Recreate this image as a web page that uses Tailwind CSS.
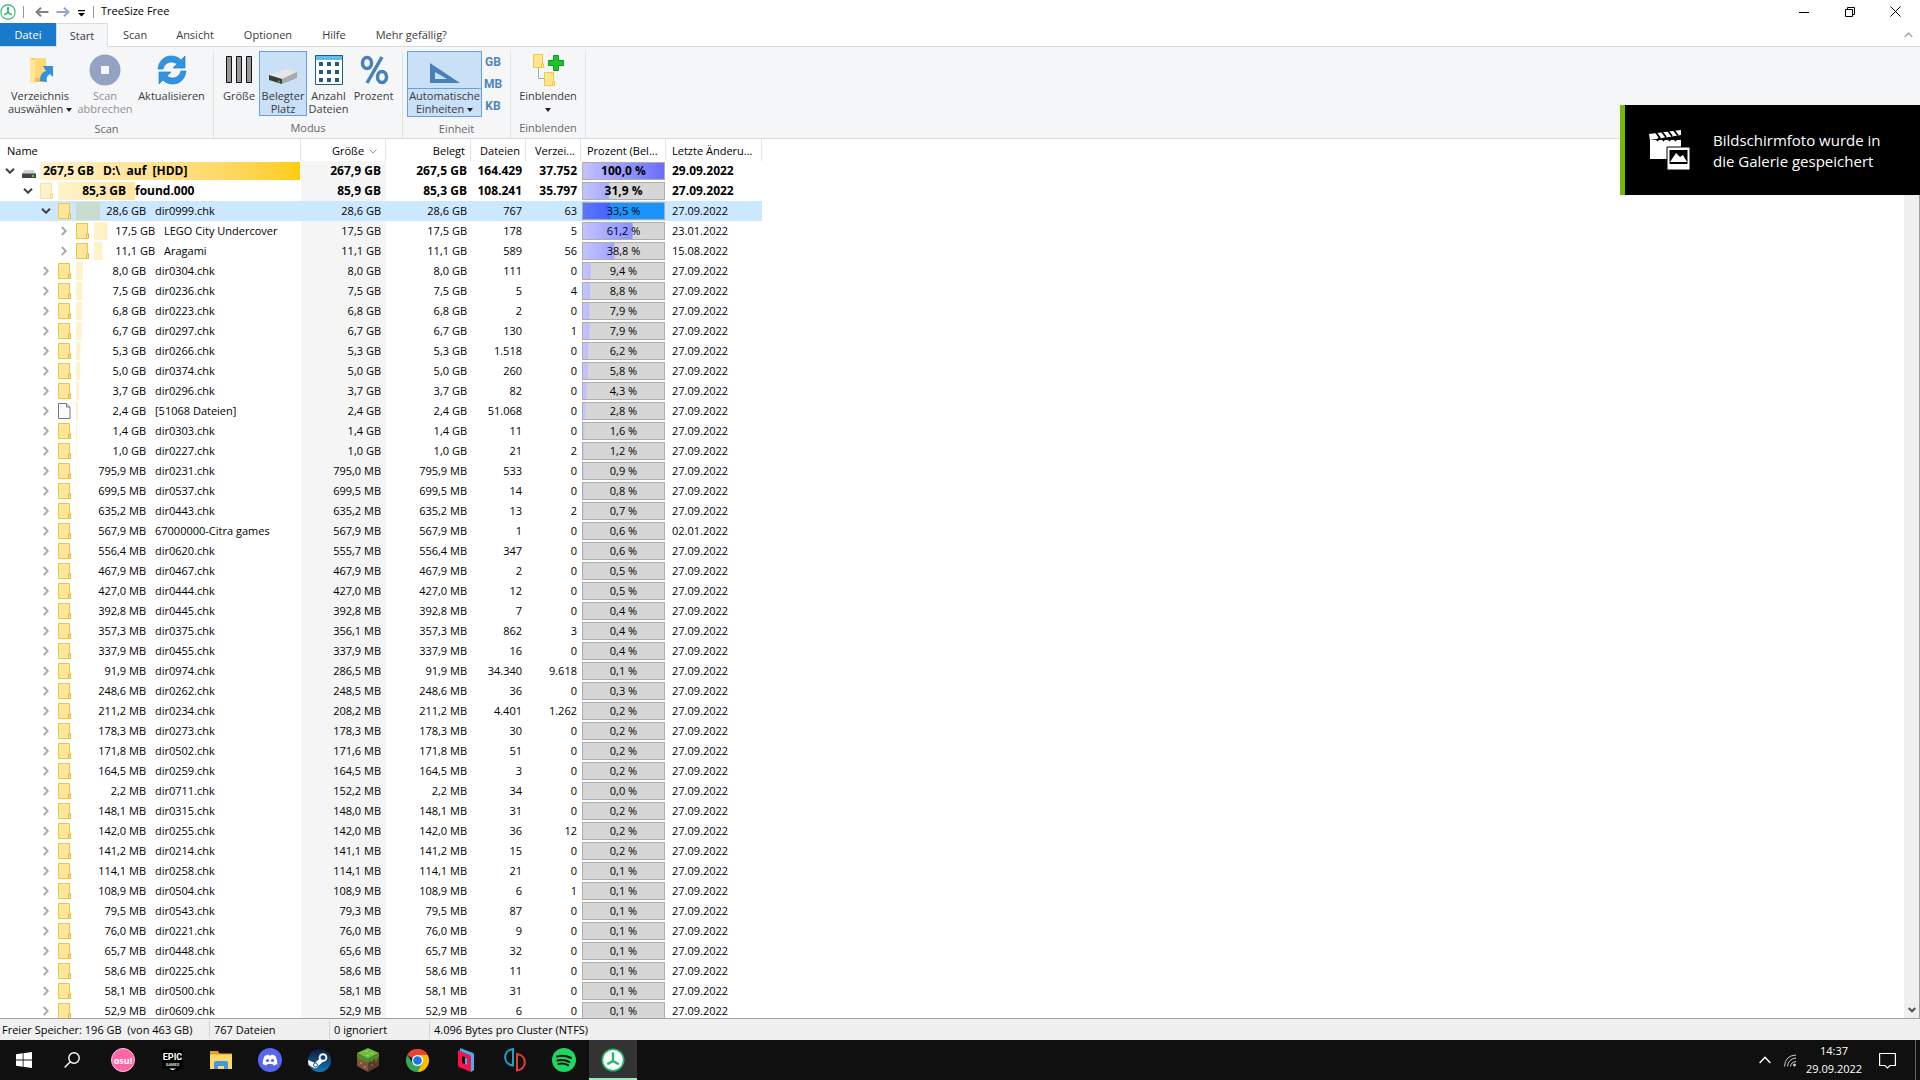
<!DOCTYPE html>
<html lang="de">
<head>
    <meta charset="UTF-8">
    <meta name="viewport" content="width=device-width, initial-scale=1.0">
    <title>TreeSize Free</title>
    <script src="https://cdn.jsdelivr.net/npm/@tailwindcss/browser@4"></script>
</head>
<body class="h-screen flex flex-col overflow-hidden bg-white text-black font-['Open_Sans','Noto_Sans',sans-serif] text-[11px] leading-[13px]">

    <!-- Icons -->
    <svg class="hidden">
        <symbol id="folder" viewBox="0 0 13 16">
            <path d="M.5.5h11v10h1v5H.5z" fill="#ffe699" stroke="#ecc544"/>
            <path d="M10.500 15.500v-4.500h2v4.500z" fill="#ffeaa8" stroke="#e4b930"/>
        </symbol>
        <symbol id="file" viewBox="0 0 13 16">
            <path d="M.5.5h8l3.500 3.500v11.500H.5z" fill="#fafafa" stroke="#777"/>
            <path d="M8.500.5v3.500H12" fill="#ddd" stroke="#777"/>
        </symbol>
        <symbol id="drive" viewBox="0 0 14 8">
            <path d="M2.500 0h9L14 4H0z" fill="#d2d2d2"/>
            <rect y="3.500" width="14" height="4.500" rx=".5" fill="#444"/>
            <rect x="10" y="5" width="2" height="2" fill="#2ee64a"/>
        </symbol>
        <symbol id="open" viewBox="0 0 10 6"><path d="M1 .7l4 4 4-4" fill="none" stroke="#404040" stroke-width="2"/></symbol>
        <symbol id="closed" viewBox="0 0 6 10"><path d="M.8 1l4 4-4 4" fill="none" stroke="#a6a6a6" stroke-width="1.800"/></symbol>
        <symbol id="logo" viewBox="0 0 24 24">
            <circle cx="12" cy="12" r="10.700" fill="#fff" stroke="#1fb866" stroke-width="1.600"/>
            <path d="M12 4.500v8.500M12 13l-5.800 3.300M12 13l5.800 3.300" stroke="#1fb866" stroke-width="2.400"/>
            <path d="M12 4l1 5h-2z" fill="#1fb866"/>
        </symbol>
    </svg>

    <!-- Titelleiste -->
    <header class="flex h-[23px] shrink-0 items-center text-[12px]">
        <svg class="size-4"><use href="#logo"/></svg>
        <span class="ml-[7px] h-3 w-px bg-[#999]"></span>
        <button aria-label="Zurück" class="ml-[11px]"><svg width="14" height="10" viewBox="0 0 14 10" fill="none" stroke="#808080" stroke-width="2"><path d="M13.500 5H2M6 .7L1.500 5 6 9.300"/></svg></button>
        <button aria-label="Vorwärts" class="ml-[7px]"><svg width="14" height="10" viewBox="0 0 14 10" fill="none" stroke="#98a7c6" stroke-width="2"><path d="M.5 5H12M8 .7L12.500 5 8 9.300"/></svg></button>
        <button aria-label="Schnellzugriff anpassen" class="ml-2 mt-[3px]"><svg width="7" height="7"><path d="M0 0h7v1.300H0zM0 3h7L3.500 6.500z"/></svg></button>
        <span class="ml-2 h-3 w-px bg-[#999]"></span>
        <h1 class="ml-[7px] pb-[2px] text-[11px]">TreeSize Free</h1>
        <div class="ml-auto flex items-center">
            <button aria-label="Minimieren" class="flex h-5 w-[46px] items-center justify-center"><svg width="10" height="10"><path d="M0 5.500h10" stroke="#000"/></svg></button>
            <button aria-label="Verkleinern" class="flex h-5 w-[45px] items-center justify-center"><svg width="10" height="10" fill="none" stroke="#000"><path d="M.5 2.500h7v7h-7zM2.500 2.500v-2h7v7h-2"/></svg></button>
            <button aria-label="Schließen" class="mr-[2px] flex h-5 w-[46px] items-center justify-center"><svg width="11" height="11" stroke="#000"><path d="M.5.5l10 10M10.500.5l-10 10"/></svg></button>
        </div>
    </header>

    <!-- Registerkarten -->
    <nav class="flex h-6 shrink-0 border-b border-[#dadbdc] text-[#3b3b3b]">
        <button class="h-[23px] w-14 bg-[#1979ca] text-white">Datei</button>
        <button class="h-6 w-[52px] border border-b-0 border-[#dadbdc] bg-[#f5f6f7]">Start</button>
        <button class="px-[15px]">Scan</button>
        <button class="px-[14px]">Ansicht</button>
        <button class="px-4">Optionen</button>
        <button class="px-[14px]">Hilfe</button>
        <button class="px-4">Mehr gefällig?</button>
        <button aria-label="Menüband minimieren" class="ml-auto mr-[7px]"><svg width="9" height="6" fill="none" stroke="#aaa" stroke-width="1.500"><path d="M.7 5l3.800-4 3.800 4"/></svg></button>
    </nav>

    <!-- Menüband -->
    <section class="flex h-[92px] shrink-0 border-b border-[#dadbdc] bg-[#f5f6f7] pt-1 text-[#3b3b3b]">
        <div class="flex flex-col">
            <div class="flex h-[66px] pl-[7px] pr-[7px]">
                <button class="flex w-[66px] flex-col items-center whitespace-nowrap">
                    <svg class="h-[38px] w-8 shrink-0" viewBox="0 0 32 38">
                        <path d="M6 7h16v24H6z" fill="#eebd55"/>
                        <path d="M10 7h12v20H10z" fill="#ffd978"/>
                        <path d="M6 7l5 3v23l-5-3z" fill="#ffe69b"/>
                        <path d="M16 30c0-6 2-9 6-10l-3-5h10v11l-3-3c-3 2-4 4-3 8z" fill="#3291dc"/>
                    </svg>
                    <span>Verzeichnis<br>auswählen <span class="inline-block border-x-3 border-t-4 border-x-transparent border-t-[#222] align-middle"></span></span>
                </button>
                <button class="flex w-16 flex-col items-center text-[#909090]">
                    <svg class="h-[38px] w-8 shrink-0" viewBox="0 0 32 38"><circle cx="16" cy="19" r="15.500" fill="#94a3c3"/><path d="M12 15h8v8h-8z" fill="#f5f8ff"/></svg>
                    <span>Scan<br>abbrechen</span>
                </button>
                <button class="flex w-[69px] flex-col items-center">
                    <svg class="h-[38px] w-8 shrink-0" viewBox="0 0 32 38">
                        <g fill="#2f94e4" stroke="#2c80c8" stroke-width=".7">
                            <path id="arrow" d="M2 18C3 9 9 5 15 5c4 0 7 1 10 4l4-4v12H17l4-4c-5-4-12-2-14 5z"/>
                            <use href="#arrow" transform="rotate(180 16 19)"/>
                        </g>
                    </svg>
                    <span>Aktualisieren</span>
                </button>
            </div>
            <p class="pt-[5px] text-center text-[#666]">Scan</p>
        </div>
        <div class="flex flex-col">
            <div class="flex h-[66px] border-l border-[#e0e1e3] pl-[5px] pr-[5px]">
                <button class="flex w-10 flex-col items-center">
                    <svg class="h-[38px] w-8 shrink-0" viewBox="0 0 32 38" fill="#999" stroke="#111"><path d="M3.500 5.500h5v26h-5zM13.500 5.500h5v26h-5zM23.500 5.500h5v26h-5z"/></svg>
                    <span>Größe</span>
                </button>
                <button class="flex w-[48px] flex-col items-center border border-[#62a2e4] bg-[#c9e0f7]">
                    <svg class="h-[37px] w-8 shrink-0" viewBox="0 0 32 37">
                        <path d="M2 23l17-6 11 3-15 7z" fill="#e6e6e6"/>
                        <path d="M15 27l15-7v6l-15 6z" fill="#a9a9a9"/>
                        <path d="M2 23l13 4v5L2 28z" fill="#3c3c3c"/>
                        <path d="M11 28.500l2 .6v1.400l-2-.6z" fill="#20d840"/>
                    </svg>
                    <span>Belegter<br>Platz</span>
                </button>
                <button class="flex w-[43px] flex-col items-center">
                    <svg class="h-[38px] w-8 shrink-0" viewBox="0 0 32 38">
                        <path d="M2.500 4.500h27v29h-27z" fill="#fff" stroke="#1f5c80"/>
                        <path d="M3 5h26v4H3z" fill="#62bdea"/>
                        <path d="M6 11h4v4H6zm8 0h4v4h-4zm8 0h4v4h-4zM6 19h4v4H6zm8 0h4v4h-4zm8 0h4v4h-4zM6 27h4v4H6zm8 0h4v4h-4zm8 0h4v4h-4z" fill="#1f5c80"/>
                    </svg>
                    <span>Anzahl<br>Dateien</span>
                </button>
                <button class="flex w-[47px] flex-col items-center">
                    <svg class="h-[38px] w-8 shrink-0" viewBox="0 0 32 38" fill="none" stroke="#4a80b8" stroke-width="3.500"><ellipse cx="9" cy="12" rx="4.500" ry="5.500"/><ellipse cx="24" cy="26" rx="4.500" ry="5.500"/><path d="M24 6L9 32"/></svg>
                    <span>Prozent</span>
                </button>
            </div>
            <p class="border-l border-[#e0e1e3] pb-1 pt-[5px] text-center text-[#666]">Modus</p>
        </div>
        <div class="flex flex-col">
            <div class="flex h-[66px] border-l border-[#e0e1e3] pl-1 pr-[6px]">
                <button class="flex w-[75px] flex-col items-center border border-[#62a2e4] bg-[#c9e0f7] whitespace-nowrap">
                    <span class="flex h-[37px] w-full shrink-0 justify-center border-b border-[#62a2e4]">
                        <svg class="h-9 w-8" viewBox="0 0 32 36"><path d="M1 11v20h30zm5 9l12 7H6z" fill="#4a80b8" fill-rule="evenodd"/></svg>
                    </span>
                    <span>Automatische<br>Einheiten <span class="inline-block border-x-3 border-t-4 border-x-transparent border-t-[#222] align-middle"></span></span>
                </button>
                <div class="flex w-[22px] flex-col items-center font-['Roboto',sans-serif] text-[12px] font-bold leading-[22px] text-[#4f86bd]">
                    <button>GB</button>
                    <button>MB</button>
                    <button>KB</button>
                </div>
            </div>
            <p class="border-l border-[#e0e1e3] pb-1 pt-[5px] text-center text-[#666]">Einheit</p>
        </div>
        <div class="flex flex-col">
            <div class="flex h-[66px] border-x border-[#e0e1e3] px-[6px]">
                <button class="flex w-[62px] flex-col items-center">
                    <svg class="h-[38px] w-8 shrink-0" viewBox="0 0 32 38">
                        <path d="M6.500 17v10.500H13" fill="none" stroke="#aaa"/>
                        <g fill="#ffe68f" stroke="#ecc94b"><path d="M1.500 3.500h9v9h1v4h-10zM12.500 21.500h9v9h1v4h-10z"/><path d="M9.500 12.500v4M20.500 30.500v4"/></g>
                        <path d="M21.500 4.500h5v5h5v5h-5v5h-5v-5h-5v-5h5z" fill="#1cc42c" stroke="#119a1e"/>
                    </svg>
                    <span>Einblenden<br><span class="inline-block border-x-3 border-t-4 border-x-transparent border-t-[#222] align-middle"></span></span>
                </button>
            </div>
            <p class="border-x border-[#e0e1e3] pb-1 pt-[5px] text-center text-[#666]">Einblenden</p>
        </div>
    </section>

    <!-- Verzeichnisbaum -->
    <main class="flex min-h-0 flex-1 border-b border-r border-[#a0a0a0]">
        <div class="min-w-0 flex-1 overflow-hidden">
            <table class="w-[762px] table-fixed border-separate border-spacing-0 whitespace-nowrap">
                <colgroup>
                    <col class="w-[301px]">
                    <col class="w-[85px]">
                    <col class="w-[85px]">
                    <col class="w-[55px]">
                    <col class="w-[55px]">
                    <col class="w-[85px]">
                    <col class="w-[96px]">
                </colgroup>
                <thead>
                    <tr class="h-[22px]">
                        <th class="border-r border-[#e5e5e5] p-0 pl-[7px] text-left font-normal">Name</th>
                        <th class="border-r border-[#e5e5e5] p-0 pr-2 text-right font-normal"><button>Größe <svg class="ml-[2px] inline" width="8" height="5" fill="none" stroke="#999"><path d="M.5.5L4 4 7.500.5"/></svg></button></th>
                        <th class="border-r border-[#e5e5e5] p-0 pr-[5px] text-right font-normal">Belegt</th>
                        <th class="border-r border-[#e5e5e5] p-0 pr-[5px] text-right font-normal">Dateien</th>
                        <th class="border-r border-[#e5e5e5] p-0 pr-[5px] text-right font-normal">Verzei...</th>
                        <th class="border-r border-[#e5e5e5] p-0 pl-[6px] text-left font-normal">Prozent (Bel...</th>
                        <th class="border-r border-[#e5e5e5] p-0 pl-[6px] text-left font-normal">Letzte Änderu...</th>
                    </tr>
                </thead>
                <tbody id="tree"></tbody>
            </table>
        </div>
        <div class="flex w-[15px] flex-col justify-end bg-[#f0f0f0]">
            <button aria-label="Nach unten" class="flex h-[17px] items-center justify-center"><svg width="8" height="6" fill="none" stroke="#505050" stroke-width="2"><path d="M.7 1L4 4.300 7.300 1"/></svg></button>
        </div>
    </main>

    <!-- Statusleiste -->
    <footer class="flex h-[21px] shrink-0 items-center bg-[#f0f0f0] leading-[18px]">
        <span class="w-[210px] whitespace-pre border-r border-[#d4d4d4] pl-[2px]">Freier Speicher: 196 GB  (von 463 GB)</span>
        <span class="w-[120px] border-r border-[#d4d4d4] pl-1">767 Dateien</span>
        <span class="w-[100px] border-r border-[#d4d4d4] pl-1">0 ignoriert</span>
        <span class="pl-1">4.096 Bytes pro Cluster (NTFS)</span>
    </footer>

    <!-- Taskleiste -->
    <nav class="flex h-10 shrink-0 bg-[#101010] text-white">
        <div class="flex gap-px">
            <button aria-label="Start" class="flex w-12 items-center justify-center"><svg width="16" height="16" fill="#fff"><path d="M0 2.300l6.700-1v6.300H0zM7.500 1.200L16 0v7.600H7.500zM0 8.400h6.700v6.300L0 13.700zM7.500 8.400H16V16l-8.500-1.200z"/></svg></button>
            <button aria-label="Suche" class="flex w-[49px] items-center justify-center pr-[3px]"><svg width="16" height="16" fill="none" stroke="#fff" stroke-width="1.400"><circle cx="10" cy="6" r="5.200"/><path d="M6.300 9.700L.6 15.400"/></svg></button>
            <button aria-label="osu!" class="flex w-12 items-center justify-center"><span class="flex size-6 items-center justify-center rounded-full border border-[#ffc4dc] bg-[#ff66aa] text-[9px] font-bold leading-none">osu!</span></button>
            <button aria-label="Epic Games" class="flex w-12 items-center justify-center">
                <svg width="21" height="23" viewBox="0 0 21 23"><path d="M2 0h17q2 0 2 2v17l-10.500 4L0 19V2q0-2 2-2z" fill="#000"/><path d="M7 19.500h7l-3.500 1.800z" fill="#fff"/><text x="10.500" y="11" text-anchor="middle" font-family="Roboto" font-size="9" font-weight="bold" fill="#fff">EPIC</text><text x="10.500" y="17" text-anchor="middle" font-family="Roboto" font-size="4" font-weight="bold" fill="#ddd">GAMES</text></svg>
            </button>
            <button aria-label="Explorer" class="flex w-12 items-center justify-center"><svg width="22" height="19"><path d="M0 0h8l1.500 2.500H22V17H0z" fill="#e3a21a"/><path d="M0 3.500h22V18H0z" fill="#ffd968"/><path d="M4 18v-6q0-2 2-2h10q2 0 2 2v6h-4v-3H8v3z" fill="#3f9be0"/></svg></button>
            <button aria-label="Discord" class="flex w-12 items-center justify-center"><svg width="24" height="24"><circle cx="12" cy="12" r="12" fill="#5865f2"/><path d="M6.500 8q2-1.200 4-1.500l.5 1h2l.5-1q2 .3 4 1.500 2 4 1.800 8-2 1.300-3.800 1.500l-1-1.500h-5l-1 1.500q-1.800-.2-3.800-1.500-.2-4 1.800-8z" fill="#fff"/><circle cx="9.500" cy="12.500" r="1.600" fill="#5865f2"/><circle cx="14.500" cy="12.500" r="1.600" fill="#5865f2"/></svg></button>
            <button aria-label="Steam" class="flex w-12 items-center justify-center">
                <svg width="23" height="23" viewBox="0 0 23 23"><defs><linearGradient id="steam" x2="0" y2="1"><stop stop-color="#10193c"/><stop offset="1" stop-color="#1479b8"/></linearGradient></defs><circle cx="11.500" cy="11.500" r="11.500" fill="url(#steam)"/><path d="M0 11l7 3 5-5 4 3-6 5q-1 3-4 2l-5.500-3z" fill="#fff"/><circle cx="15" cy="8.500" r="4.300" fill="#fff"/><circle cx="15" cy="8.500" r="2.600" fill="#17345f" stroke="#fff" stroke-width=".5"/><circle cx="7.500" cy="16" r="2" fill="#fff" stroke="#15609c"/></svg>
            </button>
            <button aria-label="Minecraft" class="flex w-12 items-center justify-center">
                <svg width="22" height="24"><path d="M11 0l11 5-11 6L0 5z" fill="#6fbd3e"/><path d="M0 5l11 6v13L0 18z" fill="#7c5439"/><path d="M22 5l-11 6v13l11-6z" fill="#5a3b28"/><path d="M0 5l11 6v4l-2-2-2 1-2-3-2 1-3-3zM22 5l-11 6v4l2-2 2 1 2-3 2 1 3-3z" fill="#4c8f2a"/><path d="M8 3h3v1H8zM13 5h3v1h-3zM9 7h3v1H9z" fill="#96dc60"/><path d="M3 14h2v2H3zM7 18h2v2H7z" fill="#a87e5c"/><path d="M14 16h2v2h-2zM18 12h2v2h-2z" fill="#7e5a40"/></svg>
            </button>
            <button aria-label="Chrome" class="flex w-12 items-center justify-center">
                <svg width="23" height="23" viewBox="0 0 48 48"><path d="M24 24L3.200 12A24 24 0 0 1 44.800 12z" fill="#ea4335"/><path d="M24 24V12h20.800A24 24 0 0 1 24 48z" fill="#fbbc04"/><path d="M24 48A24 24 0 0 1 3.200 12L14 30l10 6 10-6z" fill="#34a853"/><path d="M3.200 12A24 24 0 0 1 44.800 12H24l-10 8z" fill="#ea4335"/><circle cx="24" cy="24" r="11.500" fill="#fff"/><circle cx="24" cy="24" r="9" fill="#1a73e8"/></svg>
            </button>
            <button aria-label="Parsec" class="flex w-12 items-center justify-center"><svg width="16" height="24"><path d="M2 0l13 5q1 .5 1 2v15l-3 2V9L2 3z" fill="#35b6f4"/><path fill-rule="evenodd" d="M0 2l12 5q1 .5 1 2v15L1 19q-1-.5-1-2zM4 8v7l5 2v-7z" fill="#ff1048"/><path d="M7 9.500l2 .7V17l-2-.8z" fill="#35b6f4"/></svg></button>
            <button aria-label="Yuzu" class="flex w-12 items-center justify-center"><svg width="22" height="24" fill="none" stroke-width="2"><path d="M9 1v16.500C-1.500 16-1.500 2.500 9 1z" stroke="#19a4cf"/><path d="M13 6v16.500c10.500-1.500 10.500-15 0-16.500z" stroke="#e8402c"/></svg></button>
            <button aria-label="Spotify" class="flex w-12 items-center justify-center"><svg width="24" height="24"><circle cx="12" cy="12" r="12" fill="#1ed760"/><path d="M5 8.500q7-2 14 1.500M5.500 12.500q6-1.500 12 1.500M6.500 16q5-1.200 9.500 1.200" fill="none" stroke="#101010" stroke-width="2" stroke-linecap="round"/></svg></button>
            <button aria-label="TreeSize" class="flex w-12 items-center justify-center border-b-2 border-[#8ff0bc] bg-[#333] pt-[2px]"><svg class="size-6"><use href="#logo"/></svg></button>
        </div>
        <div class="ml-auto flex items-center">
            <button aria-label="Ausgeblendete Symbole"><svg width="12" height="8" fill="none" stroke="#fff" stroke-width="1.400"><path d="M.6 7L6 1.300 11.400 7"/></svg></button>
            <button aria-label="WLAN" class="ml-[13px]"><svg width="12" height="13" fill="none" stroke="#ccc"><path d="M.5 12.500Q1 1.500 12 1M3.500 12.500Q4 5 12 4M6.500 12.500Q7 8 12 7.500"/><circle cx="10.500" cy="11" r="1" fill="#fff"/></svg></button>
            <p class="ml-[10px] w-[56px] text-center leading-[18px]">14:37<br>29.09.2022</p>
            <button aria-label="Benachrichtigungen" class="ml-[17px]"><svg width="17" height="17" fill="none" stroke="#fff" stroke-width="1.200"><path d="M.6 1.500h15.800v12H11l-2.500 2.500L6 13.500H.6z"/></svg></button>
            <span class="ml-[19px] mr-1 h-10 w-px bg-[#666]"></span>
        </div>
    </nav>

    <!-- Benachrichtigung -->
    <aside class="absolute right-0 top-[105px] flex h-[90px] w-[300px] items-center border-l-5 border-[#76b900] bg-black text-[15px] leading-[21px] text-white">
        <svg class="ml-6 shrink-0" width="41" height="40" viewBox="0 0 41 40">
            <path d="M1 10h31v19H1z" fill="#fff"/>
            <path d="M0 4L32 0v5L1 10z" fill="#fff"/>
            <path d="M7 2.500l4 5.500M13 2l4 5M19 1l4 5M25 .5l4 5M11 7l-3 4M17 7l-3 4M23 7l-3 4M29 7l-3 4" stroke="#000" stroke-width="1.800"/>
            <path d="M18 17h23v23H18z" fill="#fff" stroke="#000"/>
            <path d="M20.500 20h18v14h-18z" fill="#000"/>
            <path d="M21 32l6-9 4 4 3-2 4 7z" fill="#fff"/>
        </svg>
        <p class="ml-[23px] pt-[2px]">Bildschirmfoto wurde in<br>die Galerie gespeichert</p>
    </aside>

    <script>
        // Ebene | Name | Größe | Belegt | Dateien | Verzeichnisse | Prozent | Letzte Änderung
        const data = `0|D:\\  auf  [HDD]|267,9 GB|267,5 GB|164.429|37.752|100,0|29.09.2022
1|found.000|85,9 GB|85,3 GB|108.241|35.797|31,9|27.09.2022
2|dir0999.chk|28,6 GB|28,6 GB|767|63|33,5|27.09.2022
3|LEGO City Undercover|17,5 GB|17,5 GB|178|5|61,2|23.01.2022
3|Aragami|11,1 GB|11,1 GB|589|56|38,8|15.08.2022
2|dir0304.chk|8,0 GB|8,0 GB|111|0|9,4|27.09.2022
2|dir0236.chk|7,5 GB|7,5 GB|5|4|8,8|27.09.2022
2|dir0223.chk|6,8 GB|6,8 GB|2|0|7,9|27.09.2022
2|dir0297.chk|6,7 GB|6,7 GB|130|1|7,9|27.09.2022
2|dir0266.chk|5,3 GB|5,3 GB|1.518|0|6,2|27.09.2022
2|dir0374.chk|5,0 GB|5,0 GB|260|0|5,8|27.09.2022
2|dir0296.chk|3,7 GB|3,7 GB|82|0|4,3|27.09.2022
2|[51068 Dateien]|2,4 GB|2,4 GB|51.068|0|2,8|27.09.2022
2|dir0303.chk|1,4 GB|1,4 GB|11|0|1,6|27.09.2022
2|dir0227.chk|1,0 GB|1,0 GB|21|2|1,2|27.09.2022
2|dir0231.chk|795,0 MB|795,9 MB|533|0|0,9|27.09.2022
2|dir0537.chk|699,5 MB|699,5 MB|14|0|0,8|27.09.2022
2|dir0443.chk|635,2 MB|635,2 MB|13|2|0,7|27.09.2022
2|67000000-Citra games|567,9 MB|567,9 MB|1|0|0,6|02.01.2022
2|dir0620.chk|555,7 MB|556,4 MB|347|0|0,6|27.09.2022
2|dir0467.chk|467,9 MB|467,9 MB|2|0|0,5|27.09.2022
2|dir0444.chk|427,0 MB|427,0 MB|12|0|0,5|27.09.2022
2|dir0445.chk|392,8 MB|392,8 MB|7|0|0,4|27.09.2022
2|dir0375.chk|356,1 MB|357,3 MB|862|3|0,4|27.09.2022
2|dir0455.chk|337,9 MB|337,9 MB|16|0|0,4|27.09.2022
2|dir0974.chk|286,5 MB|91,9 MB|34.340|9.618|0,1|27.09.2022
2|dir0262.chk|248,5 MB|248,6 MB|36|0|0,3|27.09.2022
2|dir0234.chk|208,2 MB|211,2 MB|4.401|1.262|0,2|27.09.2022
2|dir0273.chk|178,3 MB|178,3 MB|30|0|0,2|27.09.2022
2|dir0502.chk|171,6 MB|171,8 MB|51|0|0,2|27.09.2022
2|dir0259.chk|164,5 MB|164,5 MB|3|0|0,2|27.09.2022
2|dir0711.chk|152,2 MB|2,2 MB|34|0|0,0|27.09.2022
2|dir0315.chk|148,0 MB|148,1 MB|31|0|0,2|27.09.2022
2|dir0255.chk|142,0 MB|142,0 MB|36|12|0,2|27.09.2022
2|dir0214.chk|141,1 MB|141,2 MB|15|0|0,2|27.09.2022
2|dir0258.chk|114,1 MB|114,1 MB|21|0|0,1|27.09.2022
2|dir0504.chk|108,9 MB|108,9 MB|6|1|0,1|27.09.2022
2|dir0543.chk|79,3 MB|79,5 MB|87|0|0,1|27.09.2022
2|dir0221.chk|76,0 MB|76,0 MB|9|0|0,1|27.09.2022
2|dir0448.chk|65,6 MB|65,7 MB|32|0|0,1|27.09.2022
2|dir0225.chk|58,6 MB|58,6 MB|11|0|0,1|27.09.2022
2|dir0500.chk|58,1 MB|58,1 MB|31|0|0,1|27.09.2022
2|dir0609.chk|52,9 MB|52,9 MB|6|0|0,1|27.09.2022`;

        const indent = ['pl-[3px]', 'pl-[21px]', 'pl-[39px]', 'pl-[57px]'];
        const valueWidth = ['w-[54px]', 'w-[68px]', 'w-[70px]', 'w-[61px]'];
        const toNumber = text => parseFloat(text.replace(',', '.'));

        // Anteil am gesamten Laufwerk in Prozent
        function share(text) {
            const gb = text.endsWith('MB') ? toNumber(text) / 1024 : toNumber(text);
            return gb / 267.5 * 100;
        }

        function icon(level, name) {
            if (level == 0) return '<svg class="mt-[6px] h-2 w-[14px]"><use href="#drive"/></svg>';
            if (name.startsWith('[')) return '<svg class="h-4 w-[13px]"><use href="#file"/></svg>';
            return `<svg class="h-4 w-[13px] ${level == 1 ? 'opacity-50' : ''}"><use href="#folder"/></svg>`;
        }

        document.getElementById('tree').innerHTML = data.split('\n').map((line, i) => {
            const [level, name, size, used, files, dirs, percent, date] = line.split('|');
            const selected = i == 2;
            const chevron = i < 3
                ? '<svg class="h-[6px] w-[10px]"><use href="#open"/></svg>'
                : '<svg class="h-[10px] w-[6px]"><use href="#closed"/></svg>';
            return `
                <tr class="h-5 ${selected ? 'bg-[#cce8ff]' : ''} ${level < 2 ? 'text-[12px] font-bold' : ''}">
                    <td class="p-0 pr-px">
                        <div class="flex h-5 items-center ${indent[level]}">
                            <button class="flex w-[14px] shrink-0 items-center justify-center" aria-label="${i < 3 ? 'Zuklappen' : 'Aufklappen'}">${chevron}</button>
                            <span class="flex w-[23px] shrink-0 items-center justify-center">${icon(level, name)}</span>
                            <div class="relative flex h-[18px] flex-1 items-center">
                                <div class="absolute inset-0 ${selected ? 'bg-[#c9dccf]' : 'bg-linear-to-r from-[#fff2cc] to-[#ffcc00]'}" style="clip-path: inset(0 ${100 - share(used)}% 0 0)"></div>
                                <span class="relative shrink-0 pb-[2px] text-right ${valueWidth[level]}">${used}</span>
                                <span class="relative ml-[9px] whitespace-pre pb-[2px]">${name}</span>
                            </div>
                        </div>
                    </td>
                    <td class="p-0 pb-[2px] pr-[5px] text-right ${selected ? '' : 'bg-[#f5f5f5]'}">${size}</td>
                    <td class="p-0 pb-[2px] pr-1 text-right">${used}</td>
                    <td class="p-0 pb-[2px] pr-1 text-right">${files}</td>
                    <td class="p-0 pb-[2px] pr-1 text-right">${dirs}</td>
                    <td class="p-0 px-px">
                        <div class="relative flex h-[18px] items-center justify-center border border-[#adadad] ${selected ? 'bg-[#1a94fa]' : 'bg-[#d6d6d6]'}">
                            <div class="absolute inset-0 bg-linear-to-r ${selected ? 'from-[#5a76ff] to-[#2424ff]' : 'from-[#c3c3ff] to-[#6c6cff]'}" style="clip-path: inset(0 ${100 - toNumber(percent)}% 0 0)"></div>
                            <span class="relative pb-[2px]">${percent} %</span>
                        </div>
                    </td>
                    <td class="p-0 pb-[2px] pl-[6px]">${date}</td>
                </tr>`;
        }).join('');
    </script>
</body>
</html>
